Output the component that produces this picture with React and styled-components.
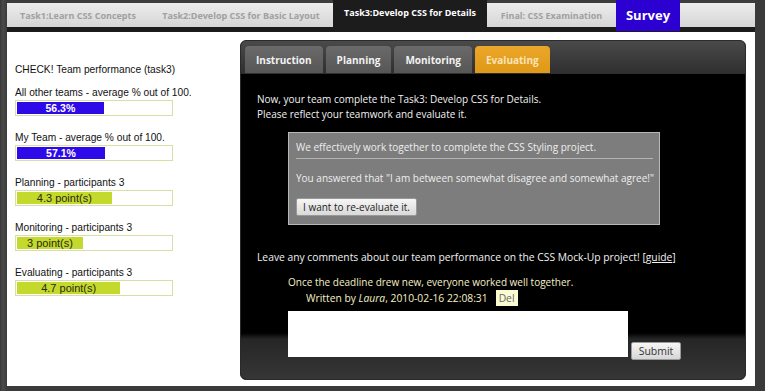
import styled, { createGlobalStyle } from "styled-components";

const GlobalStyle = createGlobalStyle`
  html, body {
    margin: 0;
    padding: 0;
    background: #404040;
  }
  body {
    font-family: "Liberation Sans", Arial, sans-serif;
  }
`;

const topTabs = [
  { label: "Task1:Learn CSS Concepts", width: 142 },
  { label: "Task2:Develop CSS for Basic Layout", width: 184 },
  { label: "Task3:Develop CSS for Details", width: 154, active: true },
  { label: "Final: CSS Examination", width: 129 },
];

const stats = [
  { label: "All other teams - average % out of 100.", text: "56.3%", pct: 56.3, kind: "percent" },
  { label: "My Team - average % out of 100.", text: "57.1%", pct: 57.1, kind: "percent" },
  { label: "Planning - participants 3", text: "4.3 point(s)", pct: (4.3 / 7) * 100, kind: "point" },
  { label: "Monitoring - participants 3", text: "3 point(s)", pct: (3 / 7) * 100, kind: "point" },
  { label: "Evaluating - participants 3", text: "4.7 point(s)", pct: (4.7 / 7) * 100, kind: "point" },
];

const panelTabs = ["Instruction", "Planning", "Monitoring", "Evaluating"];

export default function App() {
  return (
    <>
      <GlobalStyle />
      <Frame>
        <Page>
          <NavBar>
            {topTabs.map((t) => (
              <NavTab key={t.label} $active={t.active} style={{ width: t.width }}>
                {t.label}
              </NavTab>
            ))}
            <SurveyTab>Survey</SurveyTab>
          </NavBar>
          <Main>
            <Sidebar>
              <SideTitle>CHECK! Team performance (task3)</SideTitle>
              {stats.map((s) => (
                <Stat key={s.label}>
                  <StatLabel>{s.label}</StatLabel>
                  <BarBox>
                    <BarFill $kind={s.kind} style={{ width: `${s.pct}%` }}>
                      {s.text}
                    </BarFill>
                  </BarBox>
                </Stat>
              ))}
            </Sidebar>
            <Panel>
              <TabStrip>
                {panelTabs.map((t) => (
                  <PanelTab key={t} $active={t === "Evaluating"}>
                    {t}
                  </PanelTab>
                ))}
              </TabStrip>
              <PanelBody>
                <Intro>
                  Now, your team complete the Task3: Develop CSS for Details.
                  <br />
                  Please reflect your teamwork and evaluate it.
                </Intro>
                <AnswerBox>
                  <Question>We effectively work together to complete the CSS Styling project.</Question>
                  <Answer>You answered that "I am between somewhat disagree and somewhat agree!"</Answer>
                  <LightButton>I want to re-evaluate it.</LightButton>
                </AnswerBox>
                <CommentsHead>
                  Leave any comments about our team performance on the CSS Mock-Up project! <GuideLink>[guide]</GuideLink>
                </CommentsHead>
                <Comment>
                  <CommentText>Once the deadline drew new, everyone worked well together.</CommentText>
                  <CommentMeta>
                    <span>
                      Written by <em>Laura</em>, 2010-02-16 22:08:31
                    </span>
                    <DelBadge>Del</DelBadge>
                  </CommentMeta>
                </Comment>
                <CommentForm>
                  <CommentArea />
                  <SubmitButton>Submit</SubmitButton>
                </CommentForm>
              </PanelBody>
            </Panel>
          </Main>
        </Page>
      </Frame>
    </>
  );
}

const Frame = styled.div`
  width: 765px;
  height: 391px;
  box-sizing: border-box;
  padding: 0 10px 5px 7px;
  background: linear-gradient(to right, #383838, #4a4a4a 3px, #3a3a3a 7px);
`;

const Page = styled.div`
  height: 100%;
  background: #fff;
  display: flex;
  flex-direction: column;
`;

const NavBar = styled.div`
  display: flex;
  height: 32px;
  background: linear-gradient(
    to bottom,
    #3c3c3c 0,
    #3c3c3c 3px,
    #ececec 3px,
    #d6d6d6 27px,
    #1c1c1c 27px,
    #1c1c1c 32px
  );
`;

const NavTab = styled.div`
  display: flex;
  align-items: center;
  justify-content: center;
  height: ${({ $active }) => ($active ? "32px" : "24px")};
  margin-top: ${({ $active }) => ($active ? "0" : "3px")};
  padding-bottom: ${({ $active }) => ($active ? "8px" : "0")};
  box-sizing: border-box;
  background: ${({ $active }) => ($active ? "#1c1c1c" : "transparent")};
  color: ${({ $active }) => ($active ? "#fff" : "#a0a0a0")};
  font-family: "Open Sans", sans-serif;
  font-weight: 700;
  font-size: 9px;
  white-space: nowrap;
`;

const SurveyTab = styled.div`
  width: 64px;
  height: 31px;
  display: flex;
  align-items: center;
  justify-content: center;
  padding-bottom: 2px;
  box-sizing: border-box;
  background: #2b00d0;
  color: #fff;
  font-family: "Open Sans", sans-serif;
  font-weight: 700;
  font-size: 13px;
`;

const Main = styled.div`
  flex: 1;
  display: flex;
  padding: 8px 9px 6px 0;
`;

const Sidebar = styled.div`
  width: 225px;
  padding: 23px 0 0 8px;
  color: #111;
  font-size: 10.2px;
`;

const SideTitle = styled.div`
  line-height: 14px;
  margin-bottom: 9px;
`;

const Stat = styled.div`
  margin-bottom: 15px;
`;

const StatLabel = styled.div`
  line-height: 14px;
`;

const BarBox = styled.div`
  width: 158px;
  height: 16px;
  box-sizing: border-box;
  border: 1px solid #d8dea4;
  padding: 1px;
  background: #fff;
`;

const BarFill = styled.div`
  height: 12px;
  line-height: 12px;
  text-align: center;
  white-space: nowrap;
  font-size: ${({ $kind }) => ($kind === "percent" ? "10.5px" : "11px")};
  font-weight: ${({ $kind }) => ($kind === "percent" ? 700 : 400)};
  color: ${({ $kind }) => ($kind === "percent" ? "#fff" : "#2a2a10")};
  background: ${({ $kind }) => ($kind === "percent" ? "#2f0ae8" : "#c3d92c")};
`;

const Panel = styled.div`
  flex: 1;
  display: flex;
  flex-direction: column;
  border: 1px solid #2a2a2a;
  border-radius: 6px;
  overflow: hidden;
  background: #000;
`;

const TabStrip = styled.div`
  height: 33px;
  box-sizing: border-box;
  display: flex;
  align-items: flex-end;
  gap: 3px;
  padding: 0 0 1px 4px;
  background: linear-gradient(to bottom, #4a4a4a, #2e2e2e);
`;

const PanelTab = styled.div`
  height: 27px;
  display: flex;
  align-items: center;
  padding: 0 11px;
  border-radius: 4px 4px 0 0;
  background: ${({ $active }) =>
    $active ? "linear-gradient(#eba72a, #df9818)" : "linear-gradient(#6a6a6a, #565656)"};
  color: ${({ $active }) => ($active ? "#fbe5b8" : "#f2f2f2")};
  font-family: "Open Sans", sans-serif;
  font-weight: 700;
  font-size: 10px;
`;

const PanelBody = styled.div`
  flex: 1;
  padding: 18px 0 0 16px;
  font-family: "Open Sans", sans-serif;
  font-size: 10px;
  color: #f2f2f2;
  background: linear-gradient(
    to bottom,
    #000 0,
    #000 calc(100% - 46px),
    #262626 calc(100% - 40px),
    #363636 100%
  );
`;

const Intro = styled.div`
  line-height: 15px;
`;

const AnswerBox = styled.div`
  width: 372px;
  box-sizing: border-box;
  margin: 10px 0 0 31px;
  padding: 6px 6px 8px 7px;
  background: #7d7d7d;
  border: 1px solid #b8b8b8;
  color: #eee;
`;

const Question = styled.div`
  line-height: 16px;
  padding-bottom: 3px;
  border-bottom: 1px solid #b4b4b4;
`;

const Answer = styled.div`
  line-height: 16px;
  margin: 11px 0 12px;
  white-space: nowrap;
`;

const LightButton = styled.button`
  display: block;
  height: 18px;
  padding: 0 6px;
  border: 1px solid #999;
  border-radius: 2px;
  background: linear-gradient(#f6f6f6, #d9d9d9);
  color: #222;
  font-family: "Open Sans", sans-serif;
  font-size: 10px;
`;

const CommentsHead = styled.div`
  margin-top: 25px;
  line-height: 15px;
  font-size: 10.3px;
`;

const GuideLink = styled.span`
  text-decoration: underline;
`;

const Comment = styled.div`
  margin: 10px 0 0 31px;
  color: #f6f0c6;
  line-height: 15px;
`;

const CommentText = styled.div``;

const CommentMeta = styled.div`
  padding-left: 18px;
  display: flex;
  align-items: center;
  font-size: 10.3px;

  em {
    font-style: italic;
  }
`;

const DelBadge = styled.span`
  margin-left: 8px;
  padding: 1px 3px;
  background: #fbfbd2;
  color: #666;
  line-height: 14px;
`;

const CommentForm = styled.div`
  display: flex;
  align-items: flex-end;
  gap: 3px;
  margin: 5px 0 0 31px;
`;

const CommentArea = styled.div`
  width: 340px;
  height: 46px;
  background: #fff;
`;

const SubmitButton = styled.button`
  width: 50px;
  height: 18px;
  margin-bottom: -3px;
  padding: 0;
  border: 1px solid #9a9a9a;
  border-radius: 2px;
  background: linear-gradient(#f6f6f6, #d6d6d6);
  color: #333;
  font-family: "Open Sans", sans-serif;
  font-size: 10.5px;
`;
